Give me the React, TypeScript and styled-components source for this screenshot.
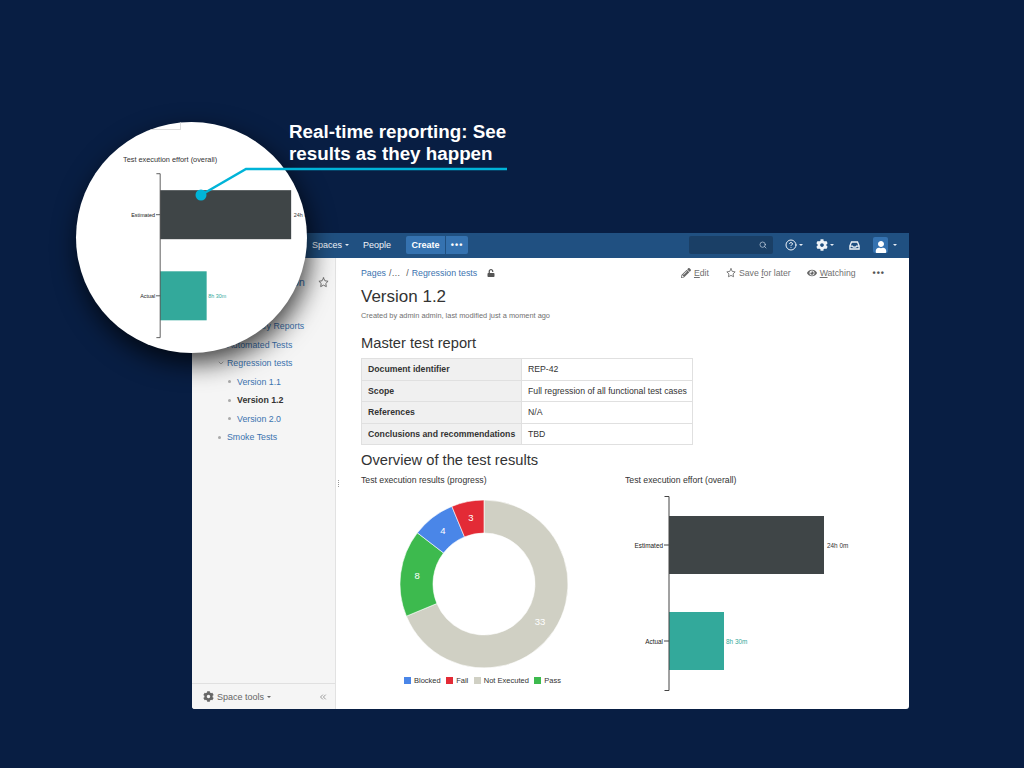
import React from 'react';
import styled, { createGlobalStyle } from 'styled-components';
import { FaCog, FaEye, FaPencilAlt, FaUnlock, FaUser } from 'react-icons/fa';
import { FiChevronDown, FiChevronsLeft, FiHelpCircle, FiSearch, FiStar } from 'react-icons/fi';

const GlobalStyle = createGlobalStyle`
  html, body {
    margin: 0;
    padding: 0;
    background: #081e43;
    font-family: 'Liberation Sans', Arial, sans-serif;
    color: #333;
  }
  * { box-sizing: border-box; }
`;

const Stage = styled.div`
  position: relative;
  width: 1024px;
  height: 768px;
  overflow: hidden;
  padding: 233px 0 0 192px;
`;

const Headline = styled.div`
  position: absolute;
  left: 289px;
  top: 121px;
  width: 240px;
  color: #fff;
  font-size: 18.8px;
  line-height: 22px;
  font-weight: 700;
  z-index: 4;
`;

const Leader = styled.svg`
  position: absolute;
  left: 0;
  top: 0;
  z-index: 3;
`;

const Lens = styled.div`
  position: absolute;
  left: 76px;
  top: 122px;
  width: 231px;
  height: 231px;
  border-radius: 50%;
  background: #fff;
  overflow: hidden;
  box-shadow: 3px 10px 26px rgba(0, 0, 0, 0.75);
  z-index: 2;
`;

const LensCorner = styled.div`
  position: absolute;
  left: 0;
  top: -4px;
  width: 105px;
  height: 12px;
  border: 1px solid #dedede;
`;

const LensChart = styled.div`
  position: absolute;
  left: 47px;
  top: 31px;
`;

const Window = styled.div`
  width: 717px;
  height: 476px;
  background: #fff;
  border-radius: 0 0 3px 3px;
  display: flex;
  flex-direction: column;
  overflow: hidden;
`;

const Header = styled.header`
  height: 25px;
  flex: none;
  background: #205081;
  display: flex;
  align-items: center;
  padding: 0 12px 1px 120px;
  color: #fff;
  font-size: 9px;
`;

const NavItem = styled.span`
  display: flex;
  align-items: center;
  gap: 3px;
  margin-right: 14px;
  color: #f0f5fa;
`;

const Caret = styled.i<{ $color?: string }>`
  width: 0;
  height: 0;
  border-left: 2.5px solid transparent;
  border-right: 2.5px solid transparent;
  border-top: 2.5px solid ${(p) => p.$color || '#e8eef5'};
`;

const CreateGroup = styled.div`
  display: flex;
  gap: 1px;
  height: 18px;
  margin-left: 1px;
`;

const CreateButton = styled.button<{ $wide?: boolean }>`
  border: 0;
  padding: 0;
  width: ${(p) => (p.$wide ? '39px' : '22px')};
  background: #3572b0;
  color: #fff;
  font: 700 9px 'Liberation Sans', Arial, sans-serif;
  letter-spacing: ${(p) => (p.$wide ? '0' : '1px')};
  border-radius: ${(p) => (p.$wide ? '2px 0 0 2px' : '0 2px 2px 0')};
`;

const HeaderRight = styled.div`
  margin-left: auto;
  display: flex;
  align-items: center;
`;

const SearchBox = styled.div`
  width: 84px;
  height: 18px;
  background: #1a3f66;
  border-radius: 2px;
  display: flex;
  align-items: center;
  justify-content: flex-end;
  padding-right: 6px;
  margin-right: 12px;
  color: #cfdbe8;
  font-size: 8px;
`;

const HeaderIcon = styled.span<{ $gap?: number; $inner?: number }>`
  display: flex;
  align-items: center;
  gap: ${(p) => p.$inner ?? 2}px;
  margin-right: ${(p) => p.$gap ?? 14}px;
  color: #eef3f8;
  font-size: 12px;
`;

const Avatar = styled.span`
  width: 15px;
  height: 16px;
  background: #3572b0;
  border-radius: 2px;
  display: flex;
  align-items: flex-end;
  justify-content: center;
  color: #fff;
  font-size: 12px;
  overflow: hidden;
`;

const Body = styled.div`
  flex: 1;
  display: flex;
  min-height: 0;
`;

const Sidebar = styled.aside`
  width: 144px;
  flex: none;
  background: #f5f5f5;
  border-right: 1px solid #e2e2e2;
  display: flex;
  flex-direction: column;
  font-size: 8.8px;
`;

const SpaceRow = styled.div`
  display: flex;
  align-items: center;
  justify-content: space-between;
  padding: 17px 6px 0 39px;
  height: 31px;
  color: #3b73af;
  font-size: 11px;
`;

const StarButton = styled.span`
  color: #666;
  font-size: 11px;
  display: flex;
`;

const Tree = styled.ul`
  list-style: none;
  margin: 28px 0 0;
  padding: 0;
`;

const TreeItem = styled.li<{ $level: number; $current?: boolean }>`
  height: 18.5px;
  display: flex;
  align-items: center;
  padding-left: ${(p) => 35 + p.$level * 10}px;
  color: ${(p) => (p.$current ? '#333' : '#3b73af')};
  font-weight: ${(p) => (p.$current ? 700 : 400)};
`;

const TreeMark = styled.span`
  width: 10px;
  flex: none;
  display: flex;
  align-items: center;
  color: #888;
  font-size: 8px;
  margin-left: -10px;
`;

const Dot = styled.i`
  width: 3px;
  height: 3px;
  margin-left: 1px;
  border-radius: 50%;
  background: #aaa;
`;

const SidebarFooter = styled.div`
  margin-top: auto;
  height: 26px;
  border-top: 1px solid #e0e0e0;
  display: flex;
  align-items: center;
  padding: 0 7px 0 11px;
  color: #666;
  font-size: 9px;
  gap: 3px;
  > svg { font-size: 11px; }
`;

const CollapseIcon = styled.span`
  margin-left: auto;
  display: flex;
  color: #888;
  font-size: 10px;
`;

const Splitter = styled.div`
  position: absolute;
  left: 338px;
  top: 480px;
  width: 1px;
  height: 7px;
  background-image: linear-gradient(#999 50%, transparent 50%);
  background-size: 1px 2px;
`;

const Main = styled.main`
  flex: 1;
  padding: 8px 25px 0;
  min-width: 0;
`;

const TopRow = styled.div`
  display: flex;
  align-items: center;
  height: 14px;
  font-size: 8.8px;
`;

const Crumb = styled.span`
  color: #3b73af;
`;

const CrumbSep = styled.span`
  color: #555;
  margin: 0 3px 0 3px;
`;

const LockIcon = styled.span`
  display: flex;
  margin-left: 10px;
  color: #555;
  font-size: 8px;
`;

const Actions = styled.div`
  margin-left: auto;
  display: flex;
  align-items: center;
  margin-right: -1px;
`;

const Action = styled.span<{ $gap?: number }>`
  display: flex;
  align-items: center;
  gap: 3px;
  margin-right: ${(p) => p.$gap ?? 17}px;
  color: #707070;
  font-size: 8.7px;
  svg { color: #666; font-size: 10px; }
  u { text-underline-offset: 1px; }
`;

const MoreDots = styled.span`
  color: #555;
  font-weight: 700;
  letter-spacing: 1px;
  font-size: 9px;
`;

const PageTitle = styled.h1`
  margin: 6px 0 0;
  font-size: 17px;
  line-height: 22px;
  font-weight: 400;
  color: #333;
`;

const Byline = styled.div`
  margin-top: 2px;
  font-size: 7.4px;
  line-height: 11px;
  color: #707070;
`;

const SectionTitle = styled.h2<{ $top: number }>`
  margin: ${(p) => p.$top}px 0 0;
  font-size: 14.7px;
  line-height: 18px;
  font-weight: 400;
  color: #333;
`;

const ReportTable = styled.table`
  margin-top: 6px;
  width: 332px;
  table-layout: fixed;
  border-collapse: collapse;
  font-size: 8.7px;
`;

const HeadCell = styled.th`
  width: 160px;
  height: 21.6px;
  padding: 0 6px;
  background: #f0f0f0;
  border: 1px solid #e0e0e0;
  text-align: left;
  font-weight: 700;
  white-space: nowrap;
`;

const DataCell = styled.td`
  height: 21.6px;
  padding: 0 6px;
  border: 1px solid #e0e0e0;
  white-space: nowrap;
`;

const ChartRow = styled.div`
  display: flex;
  margin-top: 5px;
`;

const ChartPanel = styled.section`
  width: 264px;
  flex: none;
`;

const EffortPanel = styled.section`
  margin-top: -2px;
`;

const ChartTitle = styled.div`
  font-size: 8.7px;
  line-height: 12px;
  color: #333;
`;

const Donut = styled.svg`
  display: block;
  margin: 13px 0 0 38px;
`;

const Legend = styled.div`
  display: flex;
  gap: 5.5px;
  margin: 7px 0 0 43px;
  font-size: 7.5px;
  color: #333;
`;

const LegendItem = styled.span`
  display: flex;
  align-items: center;
  gap: 3px;
`;

const Swatch = styled.i<{ $color: string }>`
  width: 7px;
  height: 7px;
  background: ${(p) => p.$color};
`;

const slices = [
  { label: 'Not Executed', value: 33, color: '#d0d0c4' },
  { label: 'Pass', value: 8, color: '#3dba4e' },
  { label: 'Blocked', value: 4, color: '#4a86e8' },
  { label: 'Fail', value: 3, color: '#e32b36' },
];

const legendOrder = ['Blocked', 'Fail', 'Not Executed', 'Pass'];

function polar(r: number, deg: number) {
  const a = (deg * Math.PI) / 180;
  return { x: 85 + r * Math.sin(a), y: 85 - r * Math.cos(a) };
}

function ringPath(from: number, to: number) {
  const large = to - from > 180 ? 1 : 0;
  const a = polar(84, from);
  const b = polar(84, to);
  const c = polar(51, to);
  const d = polar(51, from);
  return `M${a.x} ${a.y}A84 84 0 ${large} 1 ${b.x} ${b.y}L${c.x} ${c.y}A51 51 0 ${large} 0 ${d.x} ${d.y}Z`;
}

const ResultsDonut: React.FC = () => {
  const total = slices.reduce((sum, s) => sum + s.value, 0);
  let angle = 0;
  return (
    <Donut width={170} height={170} viewBox="0 0 170 170">
      {slices.map((s) => {
        const from = angle;
        const to = angle + (s.value / total) * 360;
        angle = to;
        const mid = polar(67.5, (from + to) / 2);
        return (
          <g key={s.label}>
            <path d={ringPath(from, to)} fill={s.color} stroke="#fff" strokeWidth={0.6} />
            <text x={mid.x} y={mid.y + 3.5} fill="#fff" fontSize={9.5} textAnchor="middle">
              {s.value}
            </text>
          </g>
        );
      })}
    </Donut>
  );
};

const EffortChart: React.FC<{ scale?: number }> = ({ scale = 1 }) => (
  <svg
    width={240 * scale}
    height={225 * scale}
    viewBox="0 0 240 225"
    fontFamily="'Liberation Sans', Arial, sans-serif"
    style={{ display: 'block' }}
  >
    <text x={0} y={11} fontSize={8.7} fill="#333">
      Test execution effort (overall)
    </text>
    <rect x={44} y={44} width={155} height={58} fill="#3f4547" />
    <rect x={44} y={140} width={55} height={58} fill="#33a99b" />
    <path d="M39.5 24.5H44V218.5H39.5M39 73H44M39 169H44" fill="none" stroke="#444" strokeWidth={1} />
    <text x={38} y={75.5} fontSize={6.4} fill="#222" textAnchor="end">Estimated</text>
    <text x={38} y={171.5} fontSize={6.4} fill="#222" textAnchor="end">Actual</text>
    <text x={202} y={75.5} fontSize={6.4} fill="#333">24h 0m</text>
    <text x={101} y={171.5} fontSize={6.4} fill="#33a99b">8h 30m</text>
  </svg>
);

const InboxIcon: React.FC = () => (
  <svg width={11} height={9} viewBox="0 0 11 9" fill="none" stroke="#eef3f8" strokeWidth={1.3}>
    <path d="M2.5 1h6l1.6 4v3H.9V5zM.9 5.2h2.6l.7 1h2.6l.7-1h2.6" />
  </svg>
);

const App: React.FC = () => (
  <Stage>
    <GlobalStyle />
    <Window>
      <Header>
        <NavItem>Spaces <Caret /></NavItem>
        <NavItem>People</NavItem>
        <CreateGroup>
          <CreateButton $wide>Create</CreateButton>
          <CreateButton>•••</CreateButton>
        </CreateGroup>
        <HeaderRight>
          <SearchBox><FiSearch /></SearchBox>
          <HeaderIcon $gap={13}><FiHelpCircle /><Caret /></HeaderIcon>
          <HeaderIcon $gap={15}><FaCog /><Caret /></HeaderIcon>
          <HeaderIcon $gap={13}><InboxIcon /></HeaderIcon>
          <HeaderIcon $gap={0} $inner={5}><Avatar><FaUser /></Avatar><Caret /></HeaderIcon>
        </HeaderRight>
      </Header>
      <Body>
        <Sidebar>
          <SpaceRow>
            <span>Documentation</span>
            <StarButton><FiStar /></StarButton>
          </SpaceRow>
          <Tree>
            <TreeItem $level={0}><TreeMark><Dot /></TreeMark>Preliminary Reports</TreeItem>
            <TreeItem $level={0}><TreeMark><Dot /></TreeMark>Automated Tests</TreeItem>
            <TreeItem $level={0}><TreeMark><FiChevronDown /></TreeMark>Regression tests</TreeItem>
            <TreeItem $level={1}><TreeMark><Dot /></TreeMark>Version 1.1</TreeItem>
            <TreeItem $level={1} $current><TreeMark><Dot /></TreeMark>Version 1.2</TreeItem>
            <TreeItem $level={1}><TreeMark><Dot /></TreeMark>Version 2.0</TreeItem>
            <TreeItem $level={0}><TreeMark><Dot /></TreeMark>Smoke Tests</TreeItem>
          </Tree>
          <SidebarFooter>
            <FaCog />
            Space tools <Caret $color="#666" />
            <CollapseIcon><FiChevronsLeft /></CollapseIcon>
          </SidebarFooter>
        </Sidebar>
        <Main>
          <TopRow>
            <Crumb>Pages</Crumb>
            <CrumbSep>/…</CrumbSep>
            <CrumbSep>/</CrumbSep>
            <Crumb>Regression tests</Crumb>
            <LockIcon><FaUnlock /></LockIcon>
            <Actions>
              <Action><FaPencilAlt /><span><u>E</u>dit</span></Action>
              <Action $gap={16}><FiStar /><span>Save <u>f</u>or later</span></Action>
              <Action><FaEye /><span><u>W</u>atching</span></Action>
              <MoreDots>•••</MoreDots>
            </Actions>
          </TopRow>
          <PageTitle>Version 1.2</PageTitle>
          <Byline>Created by admin admin, last modified just a moment ago</Byline>
          <SectionTitle $top={13}>Master test report</SectionTitle>
          <ReportTable>
            <tbody>
              <tr><HeadCell>Document identifier</HeadCell><DataCell>REP-42</DataCell></tr>
              <tr><HeadCell>Scope</HeadCell><DataCell>Full regression of all functional test cases</DataCell></tr>
              <tr><HeadCell>References</HeadCell><DataCell>N/A</DataCell></tr>
              <tr><HeadCell>Conclusions and recommendations</HeadCell><DataCell>TBD</DataCell></tr>
            </tbody>
          </ReportTable>
          <SectionTitle $top={6}>Overview of the test results</SectionTitle>
          <ChartRow>
            <ChartPanel>
              <ChartTitle>Test execution results (progress)</ChartTitle>
              <ResultsDonut />
              <Legend>
                {legendOrder.map((name) => (
                  <LegendItem key={name}>
                    <Swatch $color={slices.find((s) => s.label === name)!.color} />
                    {name}
                  </LegendItem>
                ))}
              </Legend>
            </ChartPanel>
            <EffortPanel>
              <EffortChart />
            </EffortPanel>
          </ChartRow>
        </Main>
      </Body>
    </Window>
    <Splitter />
    <Lens>
      <LensCorner />
      <LensChart><EffortChart scale={0.845} /></LensChart>
    </Lens>
    <Leader width={1024} height={768} viewBox="0 0 1024 768">
      <path d="M507 169H246L201 195" fill="none" stroke="#00b4d8" strokeWidth={2.5} />
      <circle cx={201} cy={195} r={5.5} fill="#00b4d8" />
    </Leader>
    <Headline>Real-time reporting: See results as they happen</Headline>
  </Stage>
);

export default App;
